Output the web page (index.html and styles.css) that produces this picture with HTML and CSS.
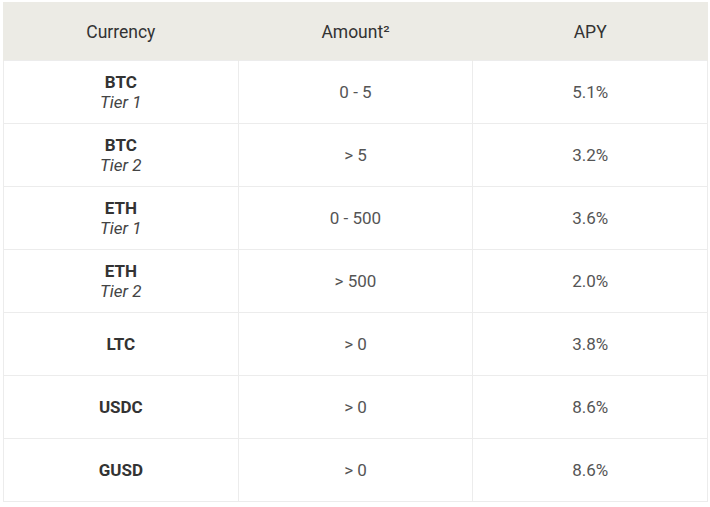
FILE: index.html
```html
<!DOCTYPE html>
<html>
<head>
<meta charset="utf-8">
<link rel="stylesheet" href="styles.css">
</head>
<body>
<table class="rates">
  <thead>
    <tr><th>Currency</th><th>Amount²</th><th>APY</th></tr>
  </thead>
  <tbody>
    <tr><td><b>BTC</b><i>Tier 1</i></td><td>0 - 5</td><td>5.1%</td></tr>
    <tr><td><b>BTC</b><i>Tier 2</i></td><td>&gt; 5</td><td>3.2%</td></tr>
    <tr><td><b>ETH</b><i>Tier 1</i></td><td>0 - 500</td><td>3.6%</td></tr>
    <tr><td><b>ETH</b><i>Tier 2</i></td><td>&gt; 500</td><td>2.0%</td></tr>
    <tr><td><b>LTC</b></td><td>&gt; 0</td><td>3.8%</td></tr>
    <tr><td><b>USDC</b></td><td>&gt; 0</td><td>8.6%</td></tr>
    <tr><td><b>GUSD</b></td><td>&gt; 0</td><td>8.6%</td></tr>
  </tbody>
</table>
</body>
</html>
```
FILE: styles.css
```css
html, body {
  margin: 0;
  background: #fff;
}
body {
  padding: 2px 2px 0 3px;
  font-family: Roboto, "Liberation Sans", sans-serif;
}
.rates {
  width: 705px;
  border-collapse: collapse;
  table-layout: fixed;
}
.rates th {
  background: #ecebe5;
  height: 57px;
  padding: 0;
  font-weight: 400;
  font-size: 17.5px;
  color: #333;
  text-align: center;
}
.rates td {
  height: 62px;
  padding: 0;
  border: 1px solid #ececec;
  text-align: center;
  font-size: 17px;
  color: #555;
  line-height: 20px;
}
.rates thead th { border: 1px solid #ecebe5; border-bottom: 0; }
.rates td b {
  display: block;
  font-weight: 700;
  color: #333;
}
.rates td i {
  display: block;
  font-style: italic;
  color: #444;
}
```
